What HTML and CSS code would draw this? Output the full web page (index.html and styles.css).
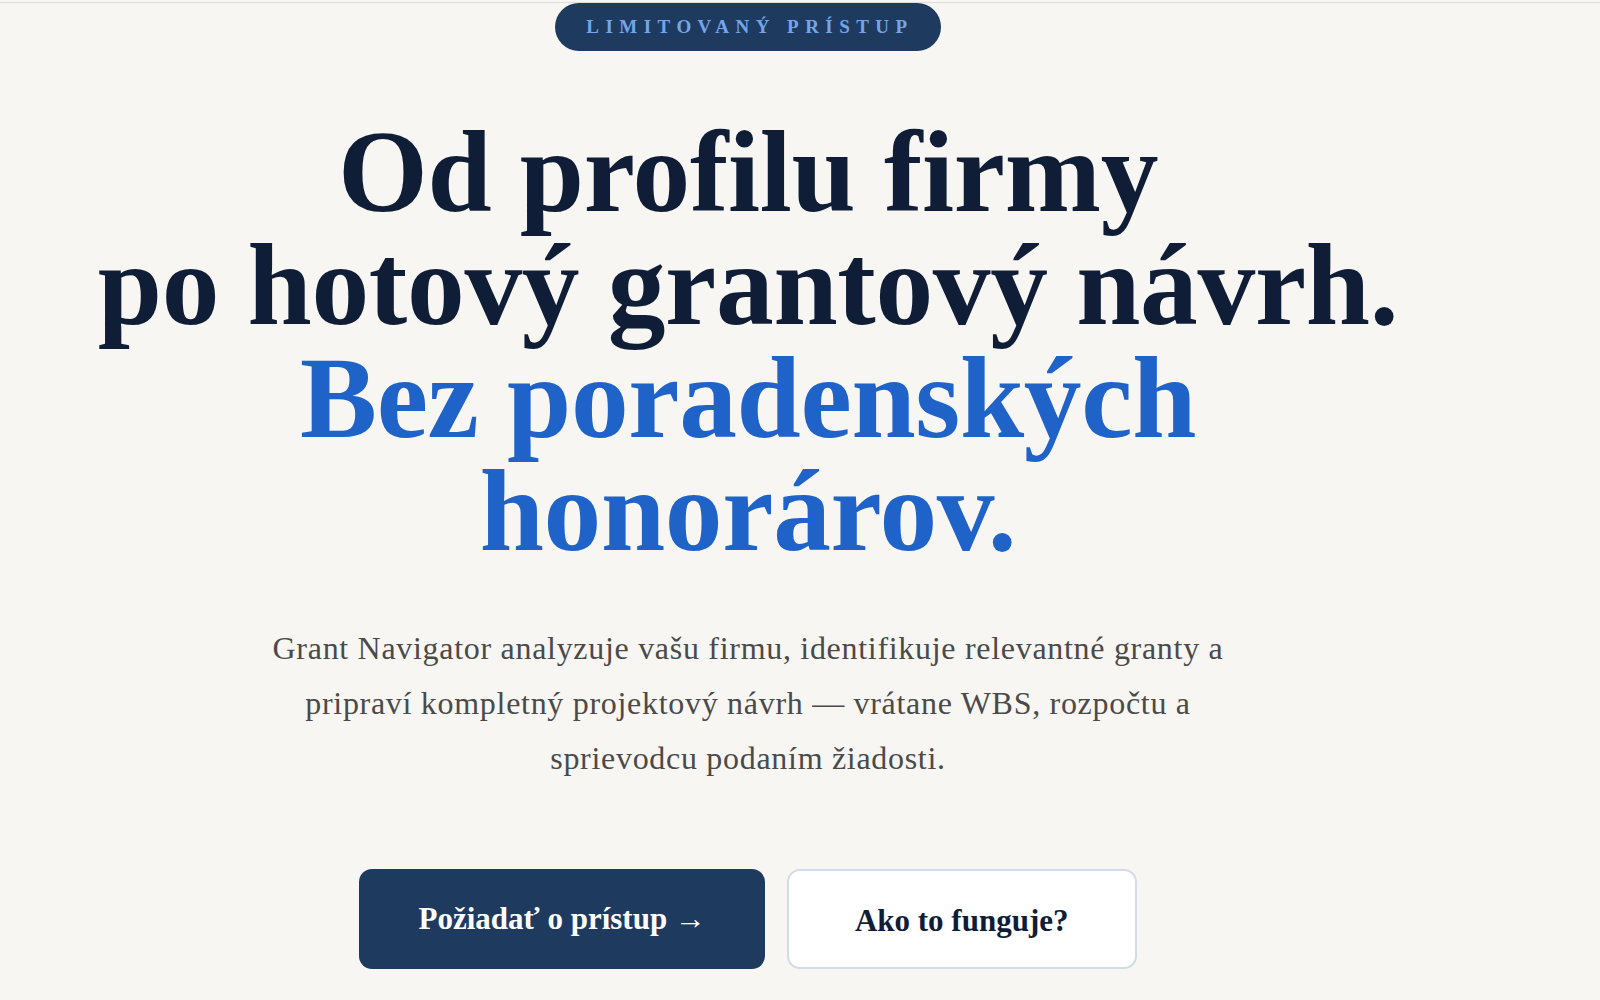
FILE: index.html
```html
<!DOCTYPE html>
<html lang="sk">
<head>
    <title>Grant Navigator</title>
    <meta charset="utf-8">
    <meta name="viewport" content="width=device-width, initial-scale=1">
    <link rel="stylesheet" href="styles.css">
</head>
<body>
    <div class="topline"></div>
    <section class="hero">
        <div class="badge">Limitovaný prístup</div>
        <h1 class="headline">
            Od profilu firmy<br>
            po hotový grantový návrh.<br>
            <span class="accent">Bez poradenských<br>honorárov.</span>
        </h1>
        <p class="lead">
            Grant Navigator analyzuje vašu firmu, identifikuje relevantné granty a<br>
            pripraví kompletný projektový návrh — vrátane WBS, rozpočtu a<br>
            sprievodcu podaním žiadosti.
        </p>
        <div class="actions">
            <a class="btn btn-primary" href="#pristup">Požiadať o prístup →</a>
            <a class="btn btn-ghost" href="#ako">Ako to funguje?</a>
        </div>
    </section>
</body>
</html>
```

FILE: styles.css
```css
* { margin: 0; padding: 0; box-sizing: border-box; }
body { font-family: "Liberation Serif", "Times New Roman", serif; background: #f7f6f2; color: #0f1e36; overflow: hidden; }
.topline { height: 3px; border-bottom: 1px solid #dddcd7; }
.hero { width: 1496px; display: flex; flex-direction: column; align-items: center; text-align: center; }
.badge { padding: 14px 27px 14px 31px; background: #1f3a5f; color: #72a6ea; border-radius: 24px; font-size: 19px; line-height: 20px; font-weight: bold; letter-spacing: 0.34em; text-transform: uppercase; }
.headline { margin-top: 65px; font-size: 115.5px; line-height: 113px; font-weight: bold; letter-spacing: -0.003em; color: #0f1e36; }
.accent { color: #1f63c9; }
.lead { margin-top: 53px; font-size: 32px; line-height: 55px; letter-spacing: 0.7px; color: #4a4a4a; }
.actions { margin-top: 83px; display: flex; gap: 22px; }
.btn { display: flex; align-items: center; justify-content: center; height: 100px; border-radius: 13px; font-size: 31px; font-weight: bold; text-decoration: none; }
.btn-primary { padding: 0 59px; background: #1f3a5f; color: #fff; }
.btn-ghost { padding: 3px 66px 0; background: #fff; color: #0f1e36; border: 2px solid #d3dbe8; }
```
